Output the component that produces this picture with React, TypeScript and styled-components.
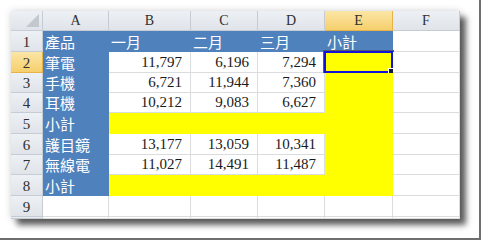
import React from 'react';
import styled, { createGlobalStyle, css } from 'styled-components';

const GlobalStyle = createGlobalStyle`
  html, body {
    margin: 0;
    padding: 0;
    background: #ffffff;
  }
`;

const COLUMNS = ['A', 'B', 'C', 'D', 'E', 'F'];
const COL_WIDTHS = [32, 66, 82, 67, 67, 68, 67];
const ROW_HEIGHTS = [20, 21, 21, 20, 20, 21, 21, 20, 21, 21, 2];

type Fill = 'blue' | 'yellow' | 'white';

interface ICell {
  text?: string;
  fill: Fill;
  numeric?: boolean;
  selected?: boolean;
}

const b = (text: string): ICell => ({ text, fill: 'blue' });
const n = (text: string): ICell => ({ text, fill: 'white', numeric: true });
const y: ICell = { fill: 'yellow' };
const w: ICell = { fill: 'white' };

const ROWS: ICell[][] = [
  [b('產品'), b('一月'), b('二月'), b('三月'), b('小計'), w],
  [b('筆電'), n('11,797'), n('6,196'), n('7,294'), { fill: 'yellow', selected: true }, w],
  [b('手機'), n('6,721'), n('11,944'), n('7,360'), y, w],
  [b('耳機'), n('10,212'), n('9,083'), n('6,627'), y, w],
  [b('小計'), y, y, y, y, w],
  [b('護目鏡'), n('13,177'), n('13,059'), n('10,341'), y, w],
  [b('無線電'), n('11,027'), n('14,491'), n('11,487'), y, w],
  [b('小計'), y, y, y, y, w],
  [w, w, w, w, w, w],
];

// row 10 is only a sliver at the bottom edge of the screenshot
const SLIVER: ICell[] = [w, w, w, w, w, w];

const SELECTED_ROW = 2;
const SELECTED_COL = 'E';

const Frame = styled.div`
  box-sizing: border-box;
  width: 481px;
  height: 240px;
  padding: 11px 0 0 11px;
  border-right: 2px solid #6e6e6e;
  border-bottom: 2px solid #6e6e6e;
  background: #ffffff;
`;

const Sheet = styled.div`
  display: grid;
  grid-template-columns: ${COL_WIDTHS.map((c) => `${c}px`).join(' ')};
  grid-template-rows: ${ROW_HEIGHTS.map((r) => `${r}px`).join(' ')};
  width: max-content;
  background: #ffffff;
  box-shadow:
    6px 6px 6px rgba(0, 0, 0, 0.62),
    0 0 7px rgba(0, 0, 0, 0.18);
`;

const headerBase = css<{ $active?: boolean }>`
  box-sizing: border-box;
  display: flex;
  align-items: flex-end;
  justify-content: center;
  overflow: hidden;
  font-family: 'Liberation Serif', serif;
  font-size: 14px;
  line-height: 18px;
  color: #2f2f2f;
  background: ${(p) =>
    p.$active ? 'linear-gradient(#fbe6a6, #f6cf6c)' : 'linear-gradient(#edf0f4, #e0e4ea)'};
  border-right: 1px solid ${(p) => (p.$active ? '#e8b24a' : '#c6ccd4')};
  border-bottom: 1px solid ${(p) => (p.$active ? '#e8b24a' : '#c6ccd4')};
`;

const Corner = styled.div`
  box-sizing: border-box;
  display: flex;
  align-items: flex-end;
  justify-content: flex-end;
  padding: 0 3px 3px 0;
  background: linear-gradient(#edf0f4, #e0e4ea);
  border-right: 1px solid #c6ccd4;
  border-bottom: 1px solid #c6ccd4;
`;

const ColHeader = styled.div<{ $active?: boolean }>`
  ${headerBase}
`;

const RowHeader = styled.div<{ $active?: boolean }>`
  ${headerBase}
  font-size: 15px;
`;

const fillColors: Record<Fill, string> = {
  blue: '#4f81bd',
  yellow: '#ffff00',
  white: '#ffffff',
};

const Cell = styled.div<{ $fill: Fill; $numeric?: boolean }>`
  box-sizing: border-box;
  position: relative;
  display: flex;
  align-items: flex-end;
  justify-content: ${(p) => (p.$numeric ? 'flex-end' : 'flex-start')};
  padding: ${(p) => (p.$numeric ? '0 8px 1px 0' : '0 0 0 2px')};
  white-space: nowrap;
  background: ${(p) => fillColors[p.$fill]};
  border-right: 1px solid ${(p) => (p.$fill === 'white' ? '#dadcdd' : fillColors[p.$fill])};
  border-bottom: 1px solid ${(p) => (p.$fill === 'white' ? '#dadcdd' : fillColors[p.$fill])};
  color: ${(p) => (p.$fill === 'blue' ? '#ffffff' : '#1a1a1a')};
  font-family: ${(p) =>
    p.$numeric ? "'Liberation Serif', serif" : "'Noto Sans CJK TC', 'Noto Sans CJK SC', sans-serif"};
  font-size: 15px;
  line-height: 18px;
`;

const Selection = styled.div`
  position: absolute;
  inset: -1px;
  border: 2px solid #1212d8;
  box-shadow: 0 0 0 1px #555a66;
  pointer-events: none;
`;

const FillHandle = styled.div`
  position: absolute;
  right: -4px;
  bottom: -4px;
  width: 5px;
  height: 5px;
  background: #111a3a;
  border: 1px solid #ffffff;
`;

function renderCells(row: ICell[]) {
  return row.map((cell, ci) => (
    <Cell key={ci} $fill={cell.fill} $numeric={cell.numeric}>
      {cell.text}
      {cell.selected && (
        <Selection>
          <FillHandle />
        </Selection>
      )}
    </Cell>
  ));
}

export default function App() {
  return (
    <>
      <GlobalStyle />
      <Frame>
        <Sheet>
          <Corner>
            <svg width="13" height="13" viewBox="0 0 13 13">
              <polygon points="13,0 13,13 0,13" fill="#c3c8cf" />
            </svg>
          </Corner>
          {COLUMNS.map((c) => (
            <ColHeader key={c} $active={c === SELECTED_COL}>
              {c}
            </ColHeader>
          ))}
          {ROWS.map((row, ri) => (
            <React.Fragment key={ri}>
              <RowHeader $active={ri + 1 === SELECTED_ROW}>{ri + 1}</RowHeader>
              {renderCells(row)}
            </React.Fragment>
          ))}
          <RowHeader />
          {renderCells(SLIVER)}
        </Sheet>
      </Frame>
    </>
  );
}
